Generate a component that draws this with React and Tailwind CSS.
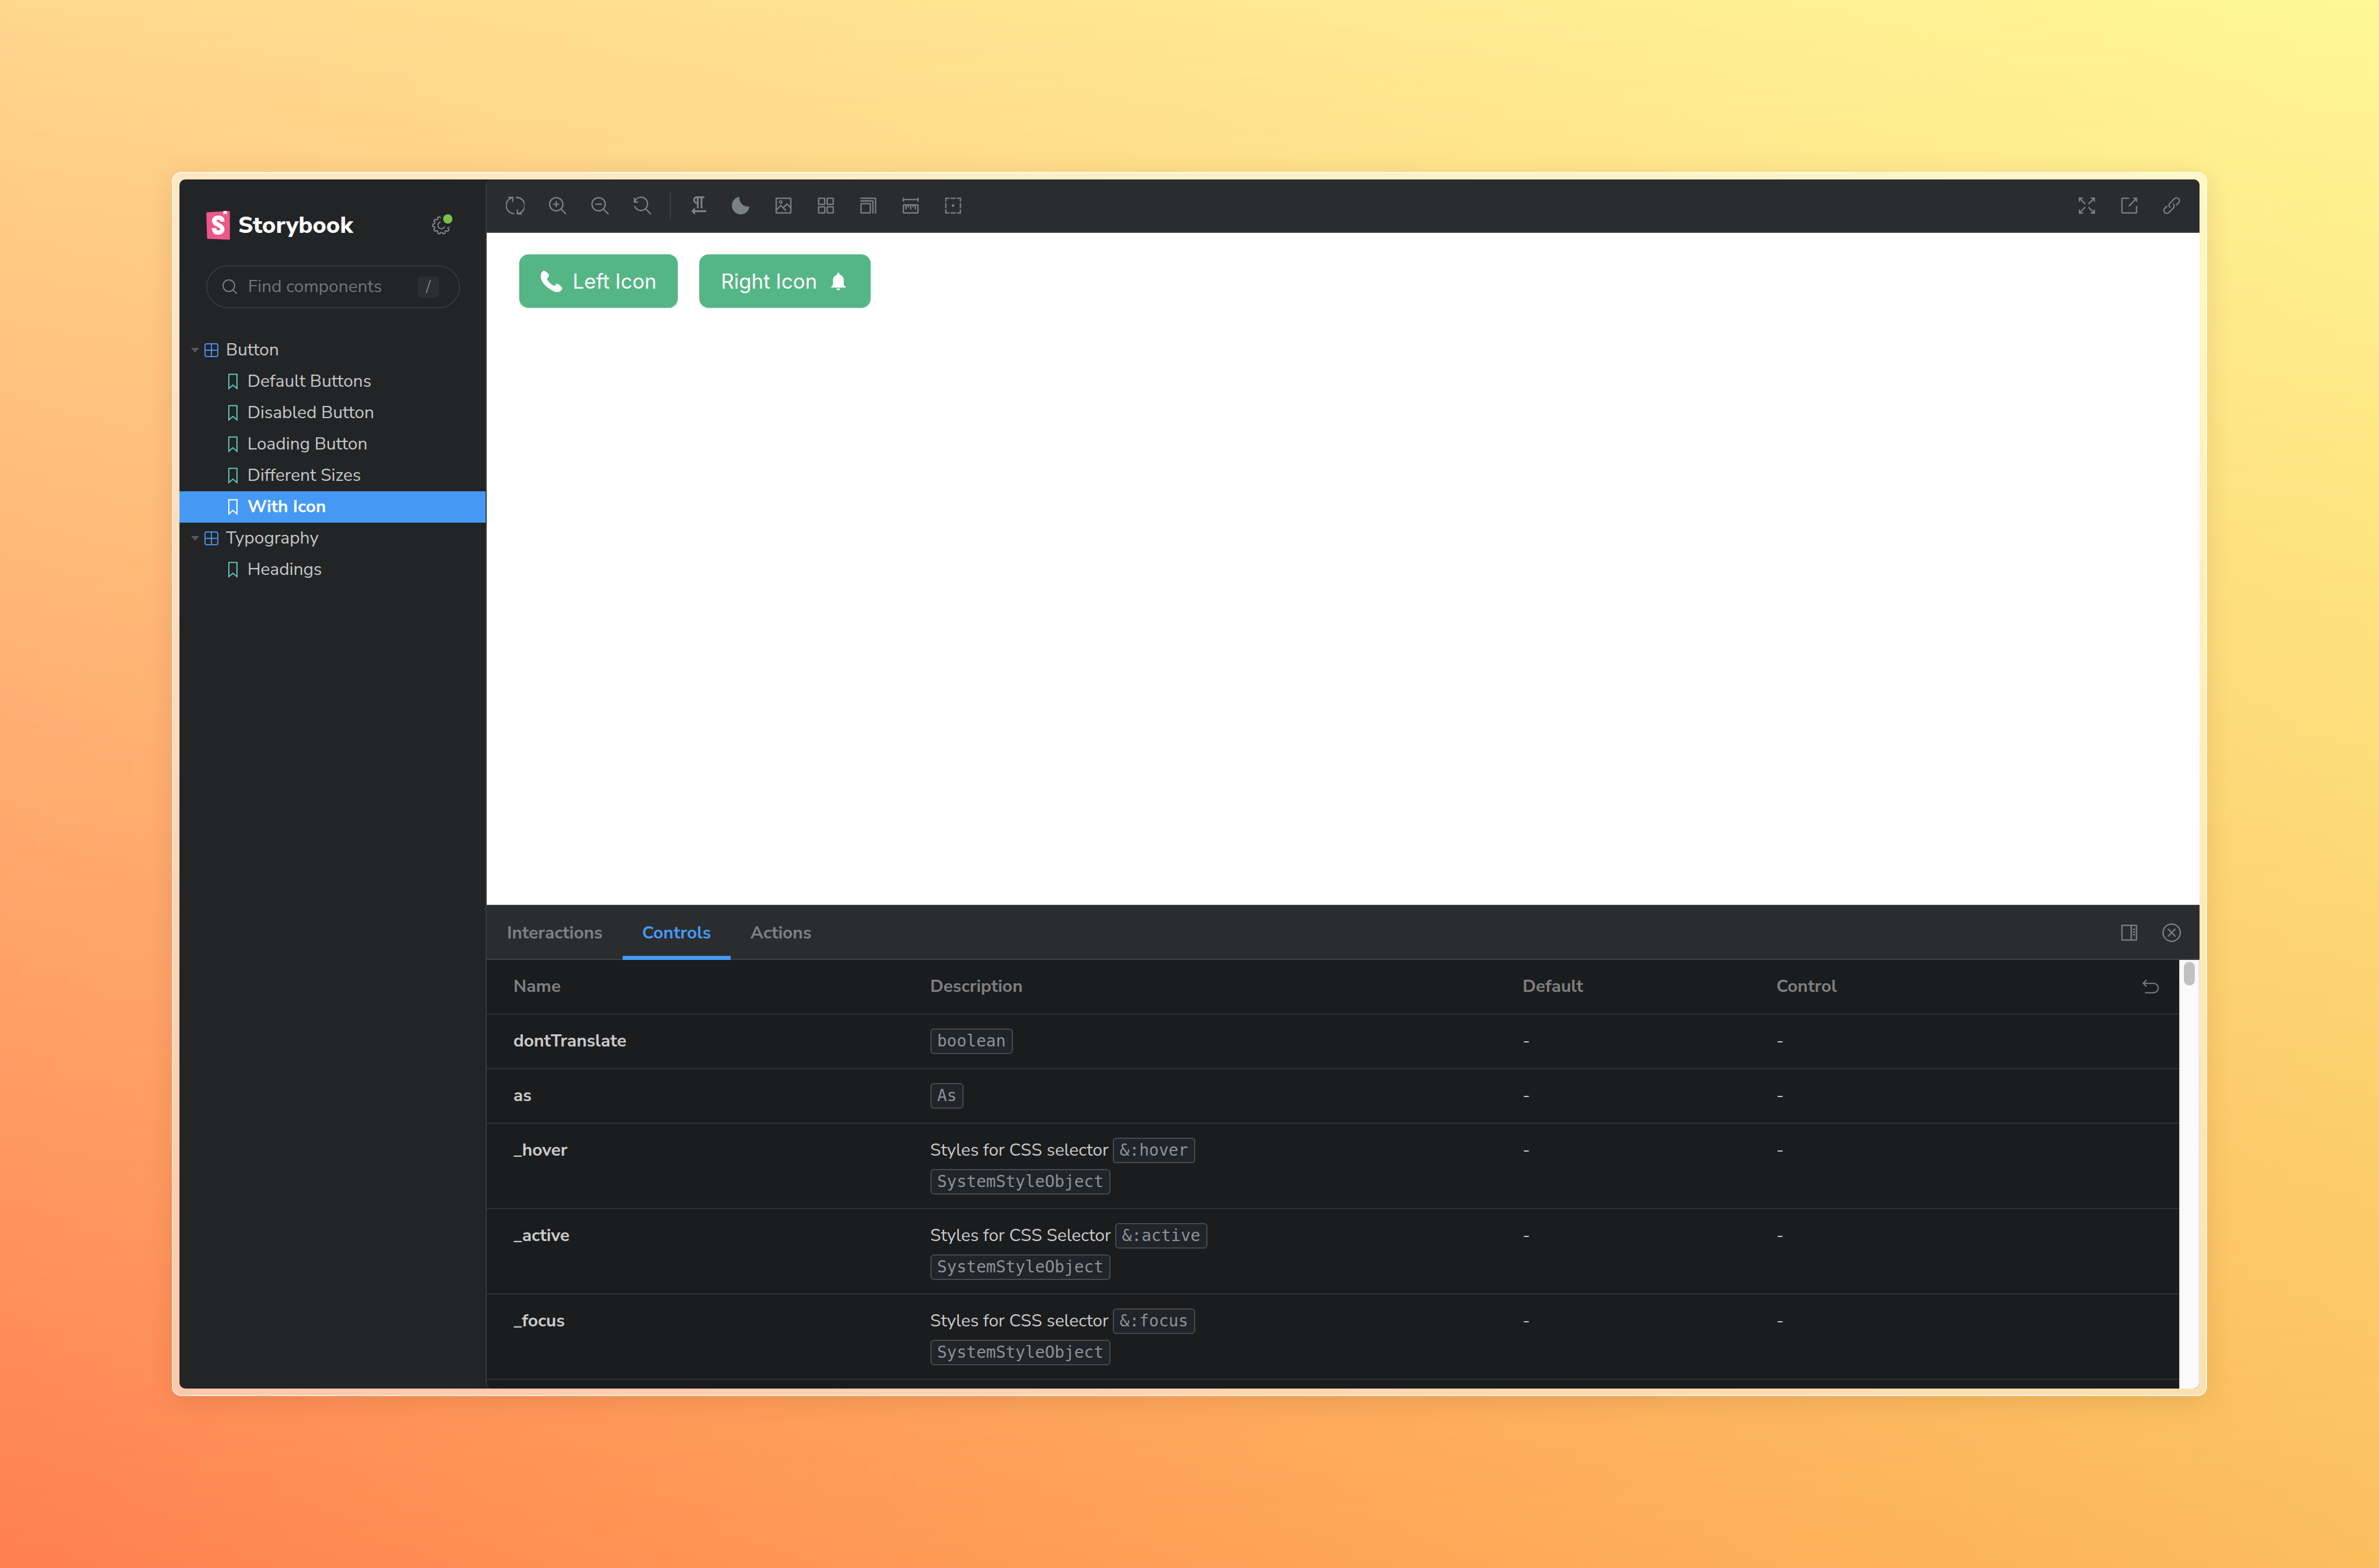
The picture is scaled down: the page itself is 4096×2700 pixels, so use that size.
const stroke = { fill: "none", stroke: "currentColor", strokeWidth: 1 };

function Icon({ children, className = "size-8" }) {
  return (
    <svg viewBox="0 0 14 14" className={className} aria-hidden="true" {...stroke}>
      {children}
    </svg>
  );
}

const Sync = () => (
  <Icon>
    <path d="M1.7.8h3.5v3.4M5.2.9A6.1 6.1 0 0 0 6.3 13" />
    <path d="M12.1 13.2H8.6V9.8M8.6 13.1A6.1 6.1 0 0 0 7.5.9" />
  </Icon>
);
const ZoomIn = () => (
  <Icon>
    <circle cx="6" cy="6" r="5" />
    <path d="M9.6 9.6l3.8 3.8M3.7 6h4.6M6 3.7v4.6" />
  </Icon>
);
const ZoomOut = () => (
  <Icon>
    <circle cx="6" cy="6" r="5" />
    <path d="M9.6 9.6l3.8 3.8M3.5 6h5" />
  </Icon>
);
const ZoomReset = () => (
  <Icon>
    <path d="M1 1.1v3.2h2.8M1.1 4.3A5 5 0 1 1 1.2 7.4M9.6 9.6l3.8 3.8" />
  </Icon>
);
const Direction = () => (
  <svg viewBox="2 2 20 20" className="size-8" fill="currentColor" aria-hidden="true">
    <path d="M10 4v4c-1.1 0-2-.9-2-2s.9-2 2-2m8-2h-8C7.79 2 6 3.79 6 6s1.79 4 4 4v5h2V4h2v11h2V4h2V2zM8 14l-4 4 4 4v-3h12v-2H8v-3z" />
  </svg>
);
const Moon = () => (
  <Icon>
    <path d="M5.7.4A6.65 6.65 0 1 0 13.3 7.7 6.6 6.6 0 0 1 5.7.4z" fill="currentColor" stroke="none" />
  </Icon>
);
const Photo = () => (
  <Icon>
    <rect x="1.5" y="1.5" width="11" height="11" rx=".2" />
    <circle cx="4.9" cy="4.3" r=".95" strokeWidth=".8" />
    <path d="M1.6 10.3L4.9 6.9l4 3.9M6.9 8.6l2.7-2.8 2.9 2.9" />
  </Icon>
);
const GridIcon = () => (
  <Icon>
    <rect x="1.5" y="1.5" width="4.6" height="4.6" rx=".2" />
    <rect x="7.9" y="1.5" width="4.6" height="4.6" rx=".2" />
    <rect x="1.5" y="7.9" width="4.6" height="4.6" rx=".2" />
    <rect x="7.9" y="7.9" width="4.6" height="4.6" rx=".2" />
  </Icon>
);
const Grow = () => (
  <Icon>
    <rect x="1.5" y="5.5" width="7" height="7" rx=".2" />
    <path d="M1 3.5h9.1q.4 0 .4.4V13M1 1.5h11.1q.4 0 .4.4V13" />
  </Icon>
);
const Ruler = () => (
  <Icon>
    <path d="M1.5 1v3M12.5 1v3M1.5 2.5h11" />
    <rect x="1.5" y="6.5" width="11" height="6" rx=".2" />
    <path d="M3.5 6.5V10M5.2 6.5v1.9M7 6.5V10M8.8 6.5v1.9M10.5 6.5V10" />
  </Icon>
);
const Outline = () => (
  <Icon>
    <path d="M4.2 1.5H1.5v2.7M9.8 1.5h2.7v2.7M4.2 12.5H1.5V9.8M9.8 12.5h2.7V9.8M5 1.5h4M5 12.5h4M1.5 5v4M12.5 5v4" />
    <circle cx="7" cy="7" r="1" fill="currentColor" stroke="none" />
  </Icon>
);
const Expand = () => (
  <Icon>
    <path d="M4.1 1.4H1.4v2.7M1.4 1.4l4.4 4.4M9.9 1.4h2.7v2.7M12.6 1.4L8.2 5.8M4.1 12.6H1.4V9.9M1.4 12.6l4.4-4.4M9.9 12.6h2.7V9.9M12.6 12.6L8.2 8.2" />
  </Icon>
);
const OpenNew = () => (
  <Icon>
    <path d="M6.8 1.5H1.9q-.4 0-.4.4v10.2q0 .4.4.4h10.2q.4 0 .4-.4V7.2M10 1.5h2.5V4M12.5 1.5l-5.8 6" />
  </Icon>
);
const LinkIcon = () => (
  <Icon>
    <g transform="translate(7 7) rotate(-45)">
      <path d="M2.5 2.2H5.2A2.2 2.2 0 0 0 5.2-2.2H.4A2.2 2.2 0 0 0-1.8.3" />
      <path d="M-2.5-2.2H-5.2A2.2 2.2 0 0 0-5.2 2.2H-.4A2.2 2.2 0 0 0 1.8-.3" />
    </g>
  </Icon>
);
const PanelRight = () => (
  <Icon>
    <rect x="1.5" y="1.5" width="11" height="11" rx=".2" />
    <path d="M8.5 1.5v11M9.7 4.5h1.7M9.7 6.5h1.7M9.7 8.5h1.7" />
  </Icon>
);
const CloseAlt = () => (
  <Icon>
    <circle cx="7" cy="7" r="6.5" />
    <path d="M4.4 4.4l5.2 5.2M9.6 4.4L4.4 9.6" strokeLinecap="round" />
  </Icon>
);
const Undo = () => (
  <Icon className="size-7">
    <path d="M3.4 1.2L.5 4.1l2.9 2.8M.6 4.1h8.8a4 4 0 0 1 0 8.1H2" />
  </Icon>
);
const Search = () => (
  <svg viewBox="0 0 26 26" className="size-[26px]" fill="none" stroke="currentColor" strokeWidth="2" aria-hidden="true">
    <circle cx="11" cy="11" r="10" />
    <path d="M18 18l7 7" />
  </svg>
);

const gearPoints = (() => {
  const teeth = 10;
  let d = "";
  for (let i = 0; i < teeth; i += 1) {
    const a = ((i + 0.5) * 2 * Math.PI) / teeth;
    const pts = [
      [-0.21, 12.2],
      [-0.13, 15],
      [0.13, 15],
      [0.21, 12.2],
    ];
    pts.forEach(([da, r], j) => {
      const x = (16 + r * Math.sin(a + da)).toFixed(2);
      const y = (16 - r * Math.cos(a + da)).toFixed(2);
      d += (i + j === 0 ? "M" : "L") + x + " " + y;
    });
  }
  return d + "Z";
})();

const Gear = () => (
  <svg viewBox="0 0 32 32" className="size-8" fill="none" stroke="currentColor" strokeWidth="2" strokeLinejoin="round" aria-hidden="true">
    <mask id="gear-cut">
      <rect width="32" height="32" fill="#fff" stroke="none" />
      <circle cx="26" cy="7" r="12" fill="#000" stroke="none" />
    </mask>
    <g mask="url(#gear-cut)">
      <path d={gearPoints} />
      <circle cx="16" cy="16" r="6" />
    </g>
  </svg>
);

const Logo = () => (
  <svg viewBox="0 0 152 187" className="h-[50px] w-[41px]" aria-hidden="true">
    <path d="M6 9L146 1q6 0 6 6v173q0 6-6 6L10 180q-5 0-5-6L0 15q0-6 6-6z" fill="#ec5788" />
    <path d="M110 2l22-1v24l-11-7-11 8z" fill="#fff" />
    <path
      d="M103 70C103 51 95 44 77 44 60 44 51 52 51 64 51 78 63 83 77 90 93 97 103 104 103 119 103 132 94 140 77 140 60 140 51 132 51 111"
      fill="none"
      stroke="#fff"
      strokeWidth="28"
    />
  </svg>
);

const Component = () => (
  <svg viewBox="0 0 24 24" className="size-6 text-[#4690e6]" fill="none" stroke="currentColor" strokeWidth="2" aria-hidden="true">
    <rect x="1" y="1" width="22" height="22" rx="3" />
    <path d="M12 1v22M1 12h22" />
  </svg>
);
const Bookmark = ({ className }) => (
  <svg viewBox="0 0 16 28" className={"h-7 w-4 " + className} fill="none" stroke="currentColor" strokeWidth="2" aria-hidden="true">
    <path d="M1 1.5h14V26l-7-6-7 6z" />
  </svg>
);
const Caret = () => (
  <svg viewBox="0 0 14 8" className="h-2 w-3.5 text-[#575b5e]" fill="currentColor" aria-hidden="true">
    <path d="M0 0h14L7 8z" />
  </svg>
);
const Phone = () => (
  <svg viewBox="0 0 14 14" className="size-[37px]" fill="currentColor" aria-hidden="true">
    <path d="M2.20731,0.0127209 C2.1105,-0.0066419 1.99432,-0.00664663 1.91687,0.032079 C0.871279,0.438698 0.212942,1.92964 0.0580392,2.95587 C-0.426031,6.28627 2.20731,9.17133 4.62766,11.0689 C6.77694,12.7534 10.9012,15.5223 13.3409,12.8503 C13.6507,12.5211 14.0186,12.037 13.9993,11.553 C13.9412,10.7397 13.186,10.1588 12.6051,9.71349 C12.1598,9.38432 11.2304,8.47427 10.6495,8.49363 C10.1267,8.51299 9.79754,9.05515 9.46837,9.38432 L8.88748,9.96521 C8.79067,10.062 7.55145,9.24878 7.41591,9.15197 C6.91248,8.8228 6.4284,8.45491 6.00242,8.04829 C5.57644,7.64167 5.18919,7.19632 4.86002,6.73161 C4.7632,6.59607 3.96933,5.41495 4.04678,5.31813 C4.04678,5.31813 4.72448,4.58234 4.91811,4.2919 C5.32473,3.67229 5.63453,3.18822 5.16982,2.45243 C4.99556,2.18135 4.78257,1.96836 4.55021,1.73601 C4.14359,1.34875 3.73698,0.942131 3.27227,0.612963 C3.02055,0.419335 2.59457,0.0708094 2.20731,0.0127209 Z" />
  </svg>
);
const Bell = () => (
  <svg viewBox="0 0 24 24" className="size-[37px]" fill="currentColor" aria-hidden="true">
    <path d="M12 22c1.1 0 2-.9 2-2h-4c0 1.1.89 2 2 2zm6-6v-5c0-3.07-1.64-5.64-4.5-6.32V4c0-.83-.67-1.5-1.5-1.5s-1.5.67-1.5 1.5v.68C7.63 5.36 6 7.92 6 11v5l-2 2v1h16v-1l-2-2z" />
  </svg>
);

function Tool({ label, children }) {
  return (
    <button type="button" aria-label={label} className="flex h-16 w-[73px] items-center justify-center">
      {children}
    </button>
  );
}

function Group({ name, children }) {
  return (
    <li>
      <button type="button" aria-expanded="true" className="flex h-[54px] w-full items-center pl-5">
        <Caret />
        <span className="ml-[9px]">
          <Component />
        </span>
        <span className="ml-[13px]">{name}</span>
      </button>
      <ul>{children}</ul>
    </li>
  );
}

function Story({ name, selected }) {
  return (
    <li>
      <a
        href="#"
        aria-current={selected ? "page" : undefined}
        className={
          selected
            ? "flex h-[54px] items-center bg-[#4599f5] pl-[84px] font-bold text-white"
            : "flex h-[54px] items-center pl-[84px]"
        }
      >
        <Bookmark className={selected ? "text-white" : "text-[#5ec4c3]"} />
        <span className="ml-[17px]">{name}</span>
      </a>
    </li>
  );
}

function Sidebar() {
  return (
    <nav className="flex w-[527px] shrink-0 flex-col text-[30px] leading-[46px] text-[#c6c7c9]">
      <div className="mt-[47px] flex h-16 items-center pr-11 pl-[46px]">
        <Logo />
        <span className="ml-3.5 text-[40px] font-extrabold text-white">Storybook</span>
        <button type="button" aria-label="Settings" className="relative ml-auto flex size-16 items-center justify-center text-[#7f8589]">
          <Gear />
          <span className="absolute top-[13px] right-[13px] size-4 rounded-full bg-[#7bbf4d]" />
        </button>
      </div>
      <label className="mt-[37px] mr-11 ml-[46px] flex h-[74px] items-center rounded-full border-2 border-[#38393b] pr-[34px] pl-[26px] text-[#7a8085]">
        <Search />
        <input
          type="text"
          aria-label="Find components"
          placeholder="Find components"
          className="ml-[18px] min-w-0 flex-1 bg-transparent outline-none placeholder:text-[#70767a]"
        />
        <kbd className="flex size-[37px] items-center justify-center rounded-md bg-[#2d2e30] font-[Nunito_Sans,Lato,sans-serif] text-[28px] leading-none">
          /
        </kbd>
      </label>
      <ul className="mt-[45px]">
        <Group name="Button">
          <Story name="Default Buttons" />
          <Story name="Disabled Button" />
          <Story name="Loading Button" />
          <Story name="Different Sizes" />
          <Story name="With Icon" selected />
        </Group>
        <Group name="Typography">
          <Story name="Headings" />
        </Group>
      </ul>
    </nav>
  );
}

function Toolbar() {
  return (
    <div className="flex h-[92px] shrink-0 items-center border-b-2 border-[#434446] bg-[#2b2c2e] px-3 text-[#7b8286]">
      <Tool label="Remount component"><Sync /></Tool>
      <Tool label="Zoom in"><ZoomIn /></Tool>
      <Tool label="Zoom out"><ZoomOut /></Tool>
      <Tool label="Reset zoom"><ZoomReset /></Tool>
      <span className="mx-[11px] h-[46px] w-0.5 bg-[#404143]" />
      <Tool label="Text direction"><Direction /></Tool>
      <Tool label="Color mode"><Moon /></Tool>
      <Tool label="Background"><Photo /></Tool>
      <Tool label="Grid"><GridIcon /></Tool>
      <Tool label="Viewport"><Grow /></Tool>
      <Tool label="Measure"><Ruler /></Tool>
      <Tool label="Outline"><Outline /></Tool>
      <span className="flex-1" />
      <Tool label="Full screen"><Expand /></Tool>
      <Tool label="Open in new tab"><OpenNew /></Tool>
      <Tool label="Copy link"><LinkIcon /></Tool>
    </div>
  );
}

function Canvas() {
  const button =
    "flex h-[92px] items-center gap-[18px] rounded-2xl bg-[#55b685] px-[37px] font-[Inter,sans-serif] text-[35px] text-white shadow-sm";
  return (
    <div className="flex min-h-0 flex-1 items-start gap-[37px] bg-white px-14 pt-[37px]">
      <button type="button" className={button}>
        <Phone />
        Left Icon
      </button>
      <button type="button" className={button}>
        Right Icon
        <Bell />
      </button>
    </div>
  );
}

function Tab({ name, selected }) {
  return (
    <button
      type="button"
      role="tab"
      aria-selected={selected ? "true" : "false"}
      className={
        selected
          ? "h-[93px] border-y-[7px] border-t-transparent border-b-[#4599f5] px-[34px] text-[#4599f5]"
          : "h-[93px] border-y-[7px] border-transparent px-[34px]"
      }
    >
      {name}
    </button>
  );
}

function Code({ children }) {
  return (
    <code className="flex h-11 items-center rounded-md border-2 border-[#454b4e] bg-[#20242b] px-2.5 font-[DejaVu_Sans_Mono,monospace] text-[28px] leading-none text-[#8e9295]">
      {children}
    </code>
  );
}

const rows = [
  { name: "dontTranslate", type: "boolean" },
  { name: "as", type: "As" },
  { name: "_hover", text: "Styles for CSS selector", sel: "&:hover", type: "SystemStyleObject" },
  { name: "_active", text: "Styles for CSS Selector", sel: "&:active", type: "SystemStyleObject" },
  { name: "_focus", text: "Styles for CSS selector", sel: "&:focus", type: "SystemStyleObject" },
];

function Panel() {
  const line = "border-b-2 border-[#303132] ";
  return (
    <section className="flex h-2/5 shrink-0 flex-col text-[30px] leading-[46px]">
      <div className="flex h-[95px] shrink-0 items-start border-y-2 border-t-[#38393b] border-b-[#3f4143] bg-[#2b2c2e] pr-3 font-bold text-[#7b8286]">
        <div role="tablist" className="flex pl-px">
          <Tab name="Interactions" />
          <Tab name="Controls" selected />
          <Tab name="Actions" />
        </div>
        <div className="mt-3.5 ml-auto flex">
          <Tool label="Change orientation"><PanelRight /></Tool>
          <Tool label="Hide addons"><CloseAlt /></Tool>
        </div>
      </div>
      <div className="flex min-h-0 flex-1 bg-[#1b1c1d]">
        <div className="min-w-0 flex-1 overflow-hidden">
          <table className="w-full table-fixed border-separate border-spacing-0 text-left text-[#c9cacb]">
            <thead className="text-[#7e7f80]">
              <tr>
                <th className={line + "w-1/4 py-[23px] pr-[35px] pl-[46px]"}>Name</th>
                <th className={line + "w-[35%] px-[35px]"}>Description</th>
                <th className={line + "w-[15%] px-[35px]"}>Default</th>
                <th className={line + "w-1/4 px-[35px]"}>
                  <div className="flex items-center justify-between">
                    Control
                    <button type="button" aria-label="Reset controls" className="text-[#7b8286]">
                      <Undo />
                    </button>
                  </div>
                </th>
              </tr>
            </thead>
            <tbody>
              {rows.map((r) => (
                <tr key={r.name}>
                  <td className={line + "py-[23px] pl-[46px] align-top font-bold"}>{r.name}</td>
                  <td className={line + "px-[35px] pt-[23px] pb-[22px] align-top"}>
                    <div className="flex flex-col gap-2">
                      {r.text && (
                        <div className="flex h-[46px] items-center gap-[7px]">
                          {r.text}
                          <Code>{r.sel}</Code>
                        </div>
                      )}
                      <div className="flex h-[46px] items-center">
                        <Code>{r.type}</Code>
                      </div>
                    </div>
                  </td>
                  <td className={line + "px-[35px] py-[23px] align-top"}>-</td>
                  <td className={line + "px-[35px] py-[23px] align-top"}>-</td>
                </tr>
              ))}
            </tbody>
          </table>
        </div>
        <div className="flex w-[35px] shrink-0 justify-center border-x-2 border-[#e8e8e8] bg-[#fafafa] pt-[3px]">
          <div className="h-[41px] w-[19px] rounded-full bg-[#c1c1c1]" />
        </div>
      </div>
    </section>
  );
}

export default function App() {
  return (
    <div className="relative flex h-screen w-full bg-linear-to-r from-[#ffd78e] to-[#fff896] p-[296px] font-[Nunito_Sans,Lato,sans-serif]">
      <div className="absolute inset-0 bg-linear-to-r from-[#ff7f50] to-[#fbbe5c] [mask-image:linear-gradient(to_top,black,transparent)]" />
      <div className="relative flex min-w-0 flex-1 rounded-2xl border-2 border-white/60 bg-white/50 p-[11px] shadow-[0_8px_44px_rgba(80,50,0,0.13)]">
        <div className="flex min-w-0 flex-1 overflow-hidden rounded-[10px] bg-[#222425]">
          <Sidebar />
          <main className="flex min-w-0 flex-1 flex-col overflow-hidden rounded-l-[10px] border-l-2 border-[#3a3b3d]">
            <Toolbar />
            <Canvas />
            <Panel />
          </main>
        </div>
      </div>
    </div>
  );
}
